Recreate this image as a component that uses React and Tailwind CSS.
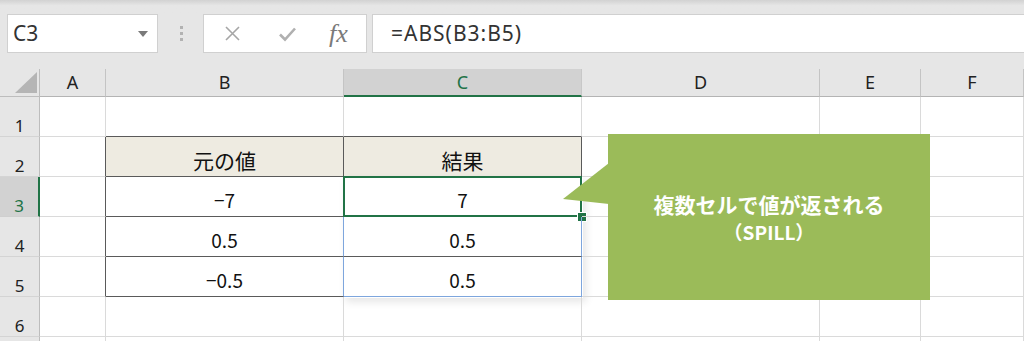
import React from "react";

const cols = ["A", "B", "C", "D", "E", "F"];

const grid = "border-r border-b border-[#dadada]";

const TopBar = () => (
  <>
    <div className="h-[14px] bg-gradient-to-b from-[#d2d2d2] to-[#e6e6e6] to-[40%]" />
    <div className="flex h-[39px] pl-[7px]">
      <div className="w-[151px] flex items-center justify-between bg-white border border-[#d0d0d0] pl-[5px] pr-[9px] text-[21px] text-[#333] font-['Noto_Sans',sans-serif]">
        <span>C3</span>
        <svg width="10" height="6" viewBox="0 0 10 6">
          <path d="M0 0 L10 0 L5 6 Z" fill="#7a7a7a" />
        </svg>
      </div>
      <div className="w-[45px] flex flex-col items-center justify-center gap-[3px] pl-[1px]">
        <span className="w-[3px] h-[3px] bg-[#b2b2b2]" />
        <span className="w-[3px] h-[3px] bg-[#b2b2b2]" />
        <span className="w-[3px] h-[3px] bg-[#b2b2b2]" />
      </div>
      <div className="w-[164px] flex items-center bg-white border border-[#d0d0d0]">
        <svg className="ml-[20px]" width="17" height="17" viewBox="0 0 17 17">
          <path d="M2 2 L15 15 M15 2 L2 15" stroke="#a6a6a6" strokeWidth="1.6" />
        </svg>
        <svg className="ml-[37px]" width="19" height="16" viewBox="0 0 19 16">
          <path d="M2 8.5 L7 13.5 L17 2.5" stroke="#b0b0b0" strokeWidth="2.6" fill="none" />
        </svg>
        <span className="ml-[32px] text-[26px] italic text-[#7a7a7a] font-['Liberation_Serif',serif] leading-none">
          fx
        </span>
      </div>
      <div className="flex-1 ml-[5px] flex items-center bg-white border-y border-l border-[#d0d0d0] pl-[18px] text-[21px] tracking-[1px] text-[#333] font-['Noto_Sans',sans-serif]">
        =ABS(B3:B5)
      </div>
    </div>
    <div className="h-[16px]" />
  </>
);

const HeaderRow = () => (
  <>
    <div className="relative border-b border-r border-[#bdbdbd] bg-[#e6e6e6]">
      <svg className="absolute left-[15px] top-[3px]" width="22" height="21" viewBox="0 0 22 21">
        <path d="M0 21 L22 21 L22 0 Z" fill="#b5b5b5" />
      </svg>
    </div>
    {cols.map((c) =>
      c === "C" ? (
        <div
          key={c}
          className="flex items-center justify-center bg-[#d2d2d2] border-b-2 border-[#217346] border-r border-r-[#c8c8c8] text-[18px] text-[#217346]"
        >
          {c}
        </div>
      ) : (
        <div
          key={c}
          className="flex items-center justify-center bg-[#e6e6e6] border-b border-r border-[#c4c4c4] border-b-[#b4b4b4] text-[18px] text-[#222]"
        >
          {c}
        </div>
      )
    )}
  </>
);

const RowHead = ({ n, active }) =>
  active ? (
    <div className="flex items-end justify-center pb-[2px] bg-[#d2d2d2] border-r-2 border-[#217346] border-b border-b-[#cfcfcf] text-[17px] leading-none text-[#217346]">
      {n}
    </div>
  ) : (
    <div className="flex items-end justify-center pb-[2px] bg-[#e6e6e6] border-r border-[#bdbdbd] border-b border-b-[#d4d4d4] text-[17px] leading-none text-[#222]">
      {n}
    </div>
  );

const Cell = ({ className = "", children }) => (
  <div
    className={
      "relative flex items-center justify-center pt-[8px] text-[19px] text-[#111] font-['Noto_Sans_CJK_JP','Noto_Sans',sans-serif] " +
      className
    }
  >
    {children}
  </div>
);

const Empty = () => (
  <>
    <Cell className={grid} />
    <Cell className={grid} />
    <Cell className={grid} />
  </>
);

export default function App() {
  return (
    <div className="relative w-[1024px] h-[341px] overflow-hidden bg-[#e6e6e6] font-['Noto_Sans',sans-serif]">
      <TopBar />
      <div className="grid grid-cols-[40px_66px_238px_238px_238px_101px_103px] grid-rows-[28px_repeat(7,40px)] bg-white">
        <HeaderRow />

        <RowHead n="1" />
        <Cell className={grid} />
        <Cell className="border-r border-[#dadada] border-b border-b-[#5a5a5a]" />
        <Cell className="border-r border-[#dadada] border-b border-b-[#5a5a5a]" />
        <Empty />

        <RowHead n="2" />
        <Cell className="border-b border-[#dadada] border-r border-r-[#5a5a5a]" />
        <Cell className="bg-[#eeebe1] border-r border-b border-[#5a5a5a] text-[21px]">元の値</Cell>
        <Cell className="bg-[#eeebe1] border-r border-b border-[#5a5a5a] text-[21px]">結果</Cell>
        <Empty />

        <RowHead n="3" active />
        <Cell className="border-b border-[#dadada] border-r border-r-[#5a5a5a]" />
        <Cell className="border-r border-b border-[#5a5a5a]">−7</Cell>
        <Cell className="border-r border-b border-[#5a5a5a]">
          7
          <div className="absolute -left-px -top-px w-[240px] h-[122px] shadow-[3px_4px_8px_rgba(0,0,0,0.10)] pointer-events-none" />
          <div className="absolute -left-px -top-px -right-px -bottom-px border-2 border-[#217346] pointer-events-none" />
          <div className="absolute -right-[5px] -bottom-[5px] w-[8px] h-[8px] bg-[#217346] ring-1 ring-white" />
        </Cell>
        <Empty />

        <RowHead n="4" />
        <Cell className="border-b border-[#dadada] border-r border-r-[#5a5a5a]" />
        <Cell className="border-b border-[#5a5a5a] border-r border-r-[#7ea6dd]">0.5</Cell>
        <Cell className="border-b border-[#5a5a5a] border-r border-r-[#7ea6dd]">0.5</Cell>
        <Empty />

        <RowHead n="5" />
        <Cell className="border-b border-[#dadada] border-r border-r-[#5a5a5a]" />
        <Cell className="border-b border-[#5a5a5a] border-r border-r-[#7ea6dd]">−0.5</Cell>
        <Cell className="border-r border-b border-[#7ea6dd]">0.5</Cell>
        <Empty />

        <RowHead n="6" />
        <Cell className={grid} />
        <Cell className={grid} />
        <Cell className={grid} />
        <Empty />

        <RowHead n="" />
        <Cell className={grid} />
        <Cell className={grid} />
        <Cell className={grid} />
        <Empty />
      </div>

      <div className="absolute left-[608px] top-[134px] z-10 w-[322px] h-[166px] bg-[#9bbb59] flex flex-col items-center justify-center pt-[2px] text-white font-bold text-[21px] leading-[28px] font-['Noto_Sans_CJK_JP',sans-serif]">
        <svg className="absolute -left-[46px] top-[28px]" width="47" height="44" viewBox="0 0 47 44">
          <path d="M47 1 L1 37 L47 42 Z" fill="#9bbb59" />
        </svg>
        <span>複数セルで値が返される</span>
        <span className="text-[19px]">（SPILL）</span>
      </div>
    </div>
  );
}
